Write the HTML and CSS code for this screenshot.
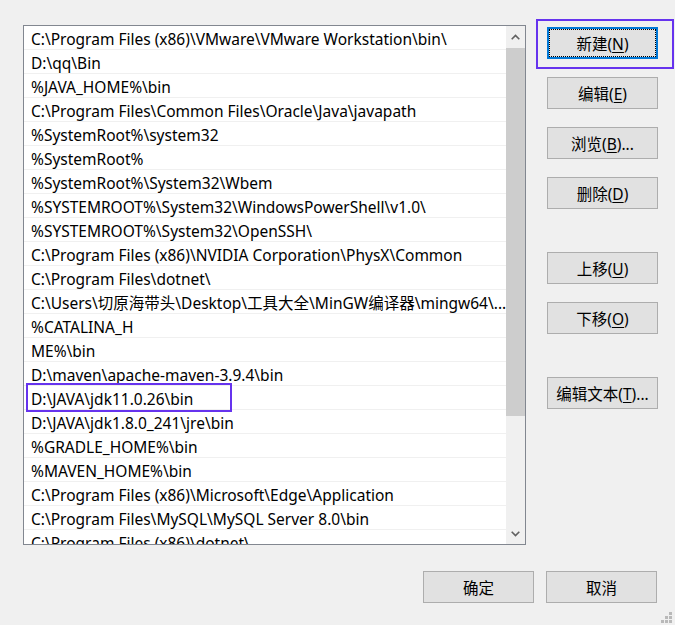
FILE: index.html
```html
<!DOCTYPE html>
<html lang="zh-CN">
<head>
    <meta charset="UTF-8">
    <title>编辑环境变量</title>
    <link rel="stylesheet" href="styles.css">
</head>
<body>
    <div class="dialog">
        <div class="main">
            <div class="path-list">
                <div class="rows">
                    <div class="row">C:\Program Files (x86)\VMware\VMware Workstation\bin\</div>
                    <div class="row">D:\qq\Bin</div>
                    <div class="row">%JAVA_HOME%\bin</div>
                    <div class="row">C:\Program Files\Common Files\Oracle\Java\javapath</div>
                    <div class="row">%SystemRoot%\system32</div>
                    <div class="row">%SystemRoot%</div>
                    <div class="row">%SystemRoot%\System32\Wbem</div>
                    <div class="row">%SYSTEMROOT%\System32\WindowsPowerShell\v1.0\</div>
                    <div class="row">%SYSTEMROOT%\System32\OpenSSH\</div>
                    <div class="row">C:\Program Files (x86)\NVIDIA Corporation\PhysX\Common</div>
                    <div class="row">C:\Program Files\dotnet\</div>
                    <div class="row">C:\Users\切原海带头\Desktop\工具大全\MinGW编译器\mingw64\...</div>
                    <div class="row">%CATALINA_H</div>
                    <div class="row">ME%\bin</div>
                    <div class="row">D:\maven\apache-maven-3.9.4\bin</div>
                    <div class="row marked">D:\JAVA\jdk11.0.26\bin<span class="mark-box"></span></div>
                    <div class="row">D:\JAVA\jdk1.8.0_241\jre\bin</div>
                    <div class="row">%GRADLE_HOME%\bin</div>
                    <div class="row">%MAVEN_HOME%\bin</div>
                    <div class="row">C:\Program Files (x86)\Microsoft\Edge\Application</div>
                    <div class="row">C:\Program Files\MySQL\MySQL Server 8.0\bin</div>
                    <div class="row">C:\Program Files (x86)\dotnet\</div>
                </div>
                <div class="scrollbar">
                    <div class="arrow">
                        <svg width="9" height="6" viewBox="0 0 9 6"><path d="M0.7 5.3 L4.5 1.5 L8.3 5.3" fill="none" stroke="#606060" stroke-width="1.6"/></svg>
                    </div>
                    <div class="track"><div class="thumb"></div></div>
                    <div class="arrow">
                        <svg width="9" height="6" viewBox="0 0 9 6"><path d="M0.7 0.7 L4.5 4.5 L8.3 0.7" fill="none" stroke="#606060" stroke-width="1.6"/></svg>
                    </div>
                </div>
            </div>

            <div class="side-buttons">
                <button class="btn focused">新建(<u>N</u>)<span class="mark-box"></span></button>
                <button class="btn">编辑(<u>E</u>)</button>
                <button class="btn">浏览(<u>B</u>)...</button>
                <button class="btn">删除(<u>D</u>)</button>
                <button class="btn spaced">上移(<u>U</u>)</button>
                <button class="btn">下移(<u>O</u>)</button>
                <button class="btn spaced">编辑文本(<u>T</u>)...</button>
            </div>
        </div>

        <div class="footer">
            <button class="btn">确定</button>
            <button class="btn">取消</button>
        </div>

        <div class="grip">
            <i></i><i></i><i></i><i></i><i></i><i></i>
        </div>
    </div>
</body>
</html>
```

FILE: styles.css
```css
body {
    margin: 0;
    background: #f0f0f0;
    font-family: 'Noto Sans', 'Noto Sans CJK SC', sans-serif;
    font-size: 15.5px;
    color: #000;
}
.dialog {
    width: 675px;
    height: 625px;
    position: relative;
    overflow: hidden;
}
.main {
    display: flex;
    padding: 25px 0 0 23px;
}
.path-list {
    width: 501px;
    height: 518px;
    border: 1px solid #828790;
    background: #fff;
    display: flex;
}
.rows {
    flex: 1;
    overflow: hidden;
}
.row {
    position: relative;
    height: 23px;
    line-height: 27px;
    padding-left: 7px;
    border-bottom: 1px solid #f0f0f0;
    white-space: nowrap;
}
.row.marked .mark-box {
    position: absolute;
    left: 2px;
    top: -3px;
    width: 202px;
    height: 25px;
    border: 2px solid #6633ee;
}
.scrollbar {
    width: 19px;
    background: #f0f0f0;
    display: flex;
    flex-direction: column;
}
.arrow {
    height: 21px;
    display: flex;
    align-items: center;
    justify-content: center;
}
.track {
    flex: 1;
}
.thumb {
    margin-top: 1px;
    height: 368px;
    background: #cdcdcd;
}
.side-buttons {
    display: flex;
    flex-direction: column;
    gap: 18px;
    margin-left: 21px;
    padding-top: 2px;
}
.btn {
    position: relative;
    width: 111px;
    height: 32px;
    padding: 0;
    background: #e1e1e1;
    border: 1px solid #adadad;
    font-family: inherit;
    font-size: 15.5px;
    color: #000;
}
.btn u {
    text-underline-offset: 2px;
}
.btn.spaced {
    margin-top: 25px;
}
.btn.focused {
    border: 2px solid #0078d7;
    outline: 1px dotted #000;
    outline-offset: -3px;
}
.btn.focused .mark-box {
    position: absolute;
    left: -13px;
    top: -10px;
    width: 134px;
    height: 46px;
    border: 2px solid #6633ee;
}
.footer {
    display: flex;
    justify-content: flex-end;
    gap: 12px;
    padding: 26px 18px 0 0;
}
.grip {
    position: absolute;
    right: 2px;
    bottom: 1px;
    width: 12px;
    height: 12px;
}
.grip i {
    position: absolute;
    width: 3px;
    height: 3px;
    background: #b9b9b9;
}
.grip i:nth-child(1) { right: 1px; top: 0; }
.grip i:nth-child(2) { right: 1px; top: 4px; }
.grip i:nth-child(3) { right: 5px; top: 4px; }
.grip i:nth-child(4) { right: 1px; top: 8px; }
.grip i:nth-child(5) { right: 5px; top: 8px; }
.grip i:nth-child(6) { right: 9px; top: 8px; }
```
